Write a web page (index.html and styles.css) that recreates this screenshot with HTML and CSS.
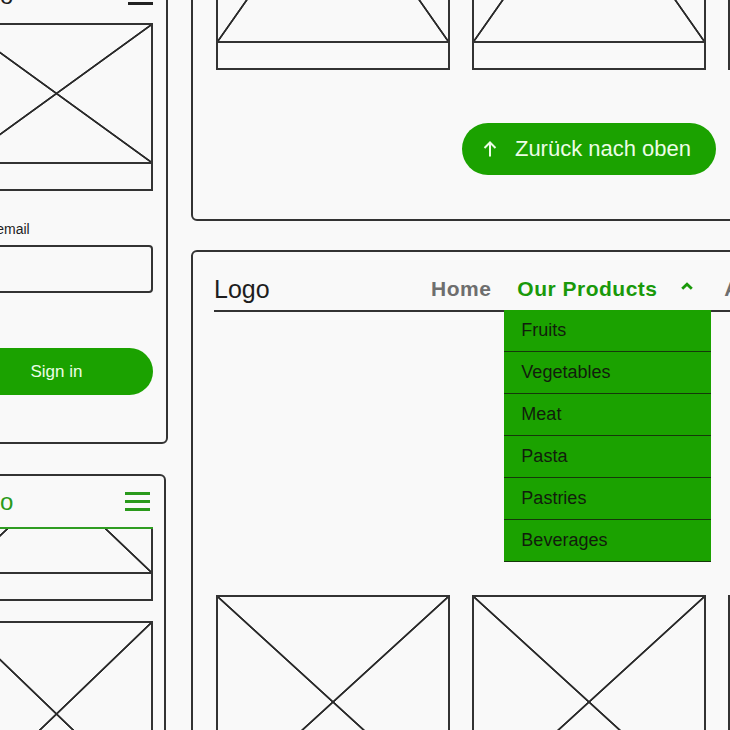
FILE: index.html
```html
<!DOCTYPE html>
<html lang="de">
  <head>
    <meta charset="utf-8">
    <title>Shop Wireframes</title>
    <link rel="stylesheet" href="styles.css">
  </head>
  <body>
    <div class="board">

      <div class="col col-mobile">
        <!-- mobile: login screen -->
        <section class="panel panel-login">
          <header class="m-header">
            <span class="m-logo">Logo</span>
            <svg class="burger" width="25" height="19" viewBox="0 0 25 19">
              <path d="M0 1.5H25M0 9.5H25M0 17.5H25" />
            </svg>
          </header>
          <div class="card">
            <div class="ph ph-small"></div>
            <div class="card-caption"></div>
          </div>
          <label class="field-label">Your email</label>
          <div class="field"></div>
          <div class="btn btn-block">Sign in</div>
        </section>

        <!-- mobile: product list, header stuck on top -->
        <section class="panel panel-list">
          <header class="m-header m-header-green">
            <span class="m-logo">Logo</span>
            <svg class="burger" width="25" height="19" viewBox="0 0 25 19">
              <path d="M0 1.5H25M0 9.5H25M0 17.5H25" />
            </svg>
          </header>
          <div class="card card-peek">
            <div class="ph ph-peek"></div>
            <div class="card-caption"></div>
          </div>
          <div class="card">
            <div class="ph ph-mobile"></div>
            <div class="card-caption"></div>
          </div>
        </section>
      </div>

      <div class="col col-desktop">
        <!-- desktop: end of product grid -->
        <section class="panel panel-grid">
          <div class="card-row">
            <div class="card card-desk"><div class="ph ph-tall"></div><div class="card-caption"></div></div>
            <div class="card card-desk"><div class="ph ph-tall"></div><div class="card-caption"></div></div>
            <div class="card card-desk"><div class="ph ph-tall"></div><div class="card-caption"></div></div>
          </div>
          <div class="to-top-row">
            <a class="btn btn-top" href="#">
              <svg class="arrow-up" width="14" height="16" viewBox="0 0 14 16">
                <path d="M7 15.5V1.5M1.5 7L7 1.5L12.5 7" />
              </svg>
              Zurück nach oben
            </a>
          </div>
        </section>

        <!-- desktop: header with open products menu -->
        <section class="panel panel-home">
          <header class="site-header">
            <div class="site-logo">Logo</div>
            <nav class="site-nav">
              <a class="nav-item" href="#">Home</a>
              <div class="nav-item nav-open">
                <span>Our Products</span>
                <svg class="chevron" width="12" height="8" viewBox="0 0 12 8">
                  <path d="M1.2 6.8L6 2.2L10.8 6.8" />
                </svg>
                <ul class="dropdown">
                  <li>Fruits</li>
                  <li>Vegetables</li>
                  <li>Meat</li>
                  <li>Pasta</li>
                  <li>Pastries</li>
                  <li>Beverages</li>
                </ul>
              </div>
              <a class="nav-item" href="#">About us</a>
              <a class="nav-item" href="#">Contact</a>
            </nav>
          </header>
          <div class="card-row card-row-home">
            <div class="card card-desk"><div class="ph ph-home"></div><div class="card-caption"></div></div>
            <div class="card card-desk"><div class="ph ph-home"></div><div class="card-caption"></div></div>
            <div class="card card-desk"><div class="ph ph-home"></div><div class="card-caption"></div></div>
          </div>
        </section>
      </div>

    </div>
  </body>
</html>
```

FILE: styles.css
```css
* {
  box-sizing: border-box;
}
html, body {
  margin: 0;
  padding: 0;
  height: 100%;
  overflow: hidden;
}
body {
  background: #f9f9f9;
  color: #1e1e1e;
  font-family: 'Liberation Sans', Arial, sans-serif;
}

.board {
  display: flex;
  align-items: flex-start;
  gap: 23px;
  width: max-content;
  margin-left: -55px;
}
.col {
  flex-shrink: 0;
  display: flex;
  flex-direction: column;
}
.col-mobile {
  margin-top: -34px;
}
.col-desktop {
  margin-top: -313px;
}

.panel {
  border: 2px solid #333;
  border-radius: 6px;
  padding: 0 13px;
  background: #f9f9f9;
}

/* wireframe boxes */
.card {
  border: 2px solid #333;
}
.card-caption {
  height: 25px;
}
.ph {
  border-bottom: 2px solid #333;
  background:
    linear-gradient(to top right, transparent calc(50% - 1.3px), #2a2a2a calc(50% - 0.6px), #2a2a2a calc(50% + 0.6px), transparent calc(50% + 1.3px)),
    linear-gradient(to bottom right, transparent calc(50% - 1.3px), #2a2a2a calc(50% - 0.6px), #2a2a2a calc(50% + 0.6px), transparent calc(50% + 1.3px));
  background-repeat: no-repeat;
}

/* mobile panels */
.panel-login {
  width: 223px;
  padding-bottom: 47px;
}
.panel-list {
  width: 221px;
  margin-top: 30px;
  padding-right: 11px;
}
.m-header {
  height: 55px;
  display: flex;
  align-items: center;
  justify-content: space-between;
}
.m-logo {
  font-size: 24px;
}
.burger path {
  fill: none;
  stroke: #222;
  stroke-width: 3;
}
.m-header-green {
  height: 53px;
  border-bottom: 2px solid #2f9d22;
}
.m-header-green .m-logo {
  color: #2a9a1c;
}
.m-header-green .burger {
  margin-right: 3px;
}
.m-header-green .burger path {
  stroke: #2a9a1c;
}
.ph-small {
  height: 139px;
}
.card-peek {
  border-top: none;
}
.ph-peek {
  height: 45px;
  background-size: 100% 180px;
  background-position: bottom;
}
.ph-mobile {
  height: 184px;
}
.panel-list .card + .card {
  margin-top: 20px;
}

.field-label {
  display: block;
  margin-top: 30px;
  padding-left: 4px;
  font-size: 14px;
  line-height: 16px;
}
.field {
  margin-top: 8px;
  height: 48px;
  border: 2px solid #333;
  border-radius: 4px;
}

.btn {
  display: flex;
  align-items: center;
  justify-content: center;
  background: #1ba200;
  color: #ecfde6;
  border-radius: 30px;
  text-decoration: none;
}
.btn-block {
  margin-top: 55px;
  height: 47px;
  font-size: 17px;
}

/* desktop panels */
.panel-grid, .panel-home {
  width: 796px;
  padding: 0 23px;
}
.panel-grid {
  padding-top: 22px;
  padding-bottom: 44px;
}
.panel-home {
  margin-top: 29px;
  padding-top: 22px;
}
.card-row {
  display: flex;
  gap: 22px;
}
.card-desk {
  width: 234px;
  flex-shrink: 0;
}
.ph-tall {
  height: 330px;
}
.ph-home {
  height: 212px;
}
.to-top-row {
  margin-top: 53px;
  display: flex;
  justify-content: center;
}
.btn-top {
  height: 52px;
  padding: 0 25px 0 21px;
  gap: 18px;
  font-size: 22px;
}
.arrow-up path {
  fill: none;
  stroke: #ecfde6;
  stroke-width: 2;
}

.site-header {
  display: flex;
  align-items: flex-start;
  margin-left: -2px;
  border-bottom: 2px solid #333;
}
.site-logo {
  flex: 0 0 204px;
  font-size: 25px;
  line-height: 30px;
}
.site-nav {
  display: flex;
  white-space: nowrap;
}
.nav-item {
  position: relative;
  padding: 0 13px 6px;
  font-size: 21px;
  font-weight: bold;
  letter-spacing: 0.5px;
  line-height: 30px;
  color: #6e6e6e;
  text-decoration: none;
}
.nav-open {
  width: 207px;
  display: flex;
  align-items: center;
  justify-content: space-between;
  padding-right: 18px;
  color: #1a990a;
}
.chevron {
  margin-top: -6px;
}
.chevron path {
  fill: none;
  stroke: #1a990a;
  stroke-width: 2.8;
}

.dropdown {
  position: absolute;
  left: 0;
  top: 100%;
  width: 100%;
  margin: 0;
  padding: 0;
  list-style: none;
  background: #1ba200;
  z-index: 1;
}
.dropdown li {
  height: 42px;
  padding-left: 17px;
  border-bottom: 1.5px solid #15380a;
  font-size: 18px;
  font-weight: normal;
  letter-spacing: 0;
  line-height: 41px;
  color: #111d0c;
}

.card-row-home {
  margin-top: 283px;
}
```
